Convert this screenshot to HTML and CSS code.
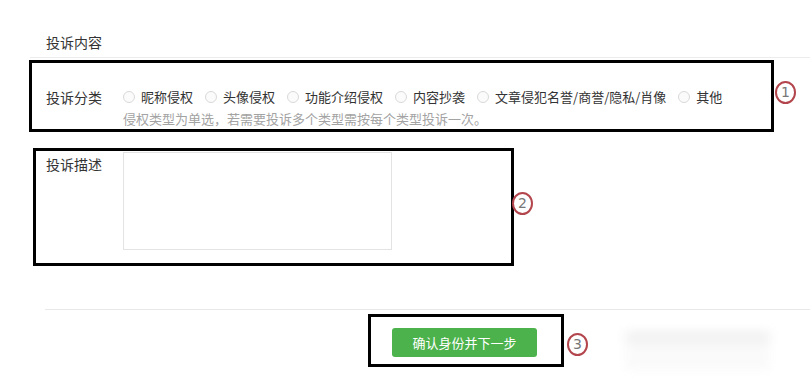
FILE: index.html
```html
<!DOCTYPE html>
<html lang="zh-CN">
<head>
<meta charset="UTF-8">
<meta name="viewport" content="width=device-width, initial-scale=1.0">
<link rel="stylesheet" href="styles.css">
<title>投诉内容</title>
</head>
<body>
<div class="page">
  <div class="section-title">投诉内容</div>

  <div class="form-row row-type">
    <div class="form-label">投诉分类</div>
    <div class="form-field">
      <div class="radio-list">
        <label class="radio-item"><span class="radio"></span>昵称侵权</label>
        <label class="radio-item"><span class="radio"></span>头像侵权</label>
        <label class="radio-item"><span class="radio"></span>功能介绍侵权</label>
        <label class="radio-item"><span class="radio"></span>内容抄袭</label>
        <label class="radio-item"><span class="radio"></span>文章侵犯名誉/商誉/隐私/肖像</label>
        <label class="radio-item"><span class="radio"></span>其他</label>
      </div>
      <div class="hint">侵权类型为单选，若需要投诉多个类型需按每个类型投诉一次。</div>
    </div>
  </div>

  <div class="form-row row-desc">
    <div class="form-label">投诉描述</div>
    <div class="form-field">
      <textarea class="desc-input"></textarea>
    </div>
  </div>

  <div class="form-footer">
    <button class="btn-next">确认身份并下一步</button>
  </div>

  <!-- annotation marks drawn over the form -->
  <div class="mark-box box-1"></div>
  <div class="mark-box box-2"></div>
  <div class="mark-box box-3"></div>
  <span class="mark-num num-1">1</span>
  <span class="mark-num num-2">2</span>
  <span class="mark-num num-3">3</span>
  <div class="watermark"></div>
</div>
</body>
</html>
```

FILE: styles.css
```css
body {
  margin: 0;
  background: #fff;
  color: #333;
  font-family: "Noto Sans CJK SC", "Noto Sans", sans-serif;
  font-size: 13px;
}
.page {
  position: relative;
  width: 810px;
  height: 388px;
  overflow: hidden;
}
.section-title {
  margin-left: 30px;
  padding: 32px 0 5px 16px;
  font-size: 14px;
  line-height: 20px;
  border-bottom: 1px solid #ececec;
}
.form-row {
  display: flex;
  padding-left: 46px;
}
.form-label {
  width: 77px;
  font-size: 14px;
  line-height: 20px;
}
.row-type {
  margin-top: 29px;
}
.row-desc {
  margin-top: 23px;
}
.row-desc .form-label {
  padding-top: 2px;
}
.radio-list {
  display: flex;
  line-height: 20px;
}
.radio-item {
  display: flex;
  align-items: center;
  margin-right: 12px;
}
.radio {
  width: 10px;
  height: 10px;
  margin-right: 6px;
  border: 1px solid #d9d9d9;
  border-radius: 50%;
  background: #fbfbfb;
}
.hint {
  margin-top: 2px;
  color: #a3a3a3;
  line-height: 20px;
}
.desc-input {
  display: block;
  box-sizing: border-box;
  width: 269px;
  height: 98px;
  margin: 0;
  border: 1px solid #e3e3e3;
  resize: none;
}
.form-footer {
  margin: 59px 0 0 45px;
  padding: 18px 0 0 347px;
  border-top: 1px solid #e9e9e9;
}
.btn-next {
  width: 145px;
  height: 29px;
  padding: 0;
  border: none;
  border-radius: 3px;
  background: #4cb24c;
  color: #fff;
  font-family: inherit;
  font-size: 13px;
}
.mark-box {
  position: absolute;
  border: 3px solid #000;
  box-sizing: border-box;
}
.box-1 {
  left: 29px;
  top: 60px;
  width: 745px;
  height: 72px;
}
.box-2 {
  left: 33px;
  top: 148px;
  width: 481px;
  height: 118px;
}
.box-3 {
  left: 368px;
  top: 314px;
  width: 196px;
  height: 53px;
}
.mark-num {
  position: absolute;
  width: 17px;
  height: 19px;
  border: 2px solid #b3454d;
  border-radius: 50%;
  color: #777;
  font-family: "DejaVu Sans", sans-serif;
  font-size: 14px;
  line-height: 19px;
  text-align: center;
}
.num-1 {
  left: 775px;
  top: 81px;
}
.num-2 {
  left: 512px;
  top: 192px;
}
.num-3 {
  left: 567px;
  top: 333px;
}
.watermark {
  position: absolute;
  left: 625px;
  top: 318px;
  width: 145px;
  height: 52px;
  background: linear-gradient(#fff 0, #fff 12px, #ececec 12px, #ececec 27px, #f7f7f7 27px);
  filter: blur(4px);
  opacity: 0.6;
}
```
